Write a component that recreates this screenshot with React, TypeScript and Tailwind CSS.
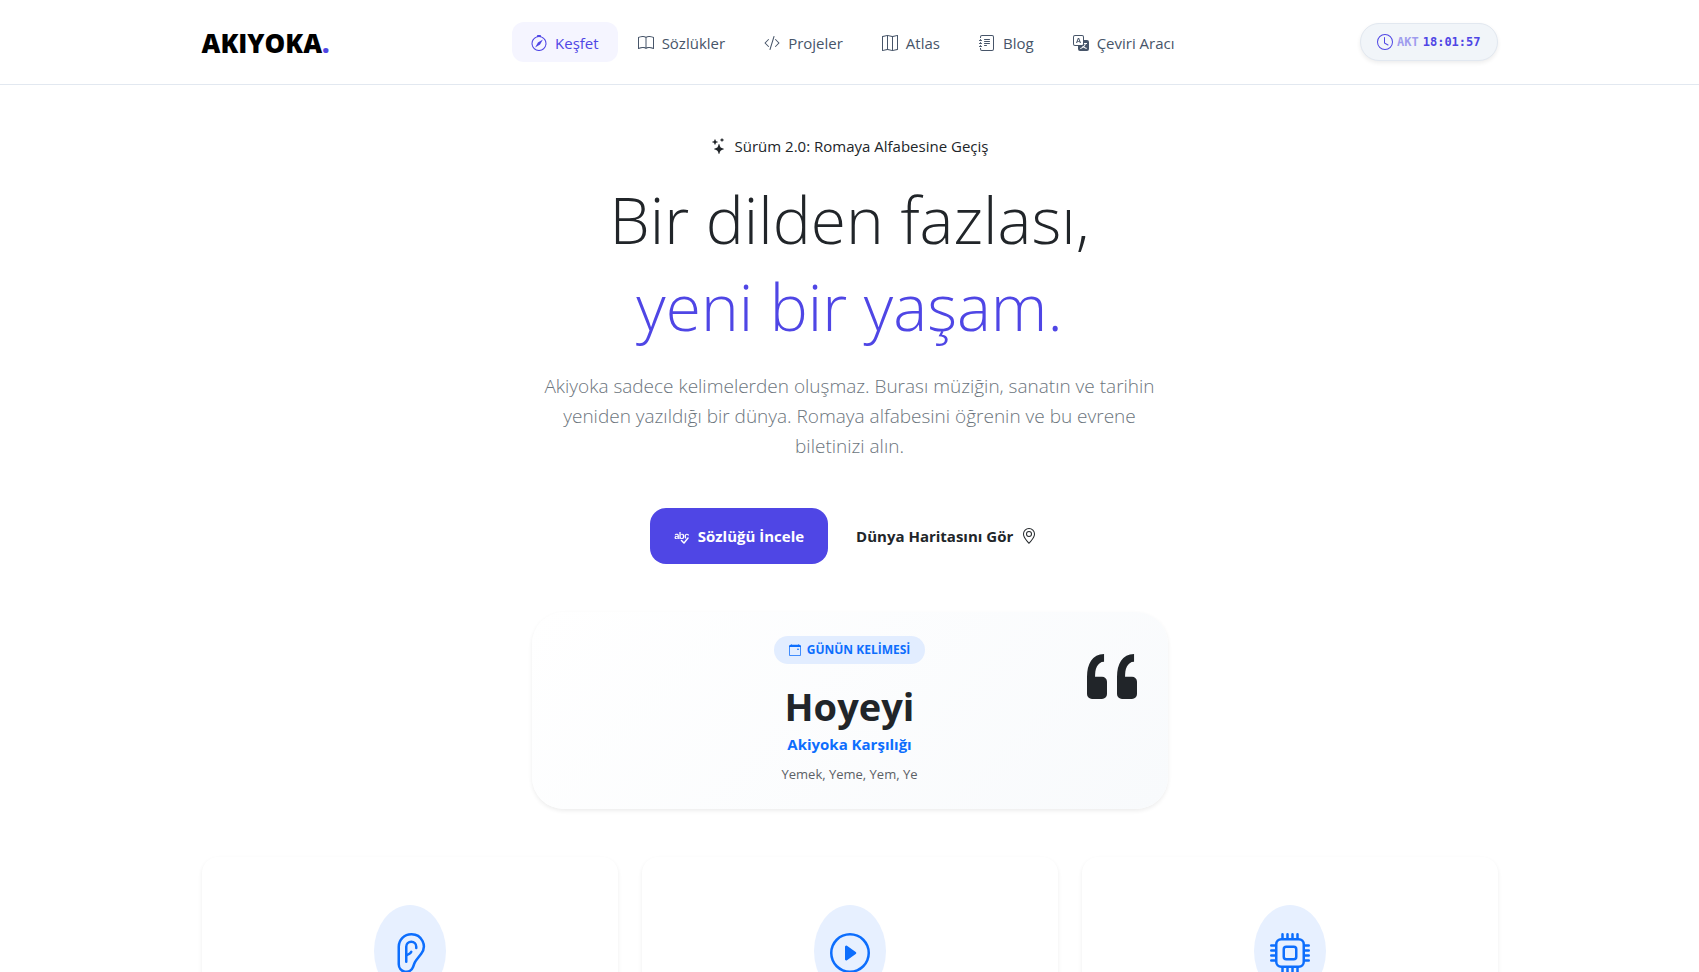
import type { ReactNode } from "react";
import {
  BsBook,
  BsCalendarEvent,
  BsClock,
  BsCodeSlash,
  BsCompass,
  BsCpu,
  BsEar,
  BsGeoAlt,
  BsJournalText,
  BsMap,
  BsPlayCircle,
  BsQuote,
  BsSpellcheck,
  BsStars,
  BsTranslate,
} from "react-icons/bs";

const navItems = [
  { label: "Keşfet", icon: <BsCompass />, active: true },
  { label: "Sözlükler", icon: <BsBook />, active: false },
  { label: "Projeler", icon: <BsCodeSlash />, active: false },
  { label: "Atlas", icon: <BsMap />, active: false },
  { label: "Blog", icon: <BsJournalText />, active: false },
  { label: "Çeviri Aracı", icon: <BsTranslate />, active: false },
];

function Header() {
  return (
    <header className="border-b border-[#e2e8f0] bg-white">
      <div className="mx-auto flex h-[84px] max-w-[1320px] items-center justify-between px-3">
        <a href="#" className="mr-4 pt-0.5 text-[26px] leading-10 font-extrabold text-black">
          AKIYOKA<span className="text-[#4f46e5]">.</span>
        </a>
        <nav className="flex gap-px">
          {navItems.map((item) => (
            <a
              key={item.label}
              href="#"
              className={
                item.active
                  ? "flex h-10 items-center gap-2 rounded-xl bg-[#f5f5ff] px-[19px] pt-0.5 text-[#4f46e5]"
                  : "flex h-10 items-center gap-2 rounded-xl px-[19px] pt-0.5 text-[#475569]"
              }
            >
              <span className="text-base">{item.icon}</span>
              {item.label}
            </a>
          ))}
        </nav>
        <div className="flex h-[38px] items-center gap-1 rounded-full border border-[#e2e8f0] bg-[#f1f5f9] px-4 font-['DejaVu_Sans_Mono',monospace] text-xs font-bold text-[#4f46e5] shadow-[0_2px_4px_rgba(0,0,0,0.075)]">
          <BsClock className="text-base" />
          <span className="opacity-50">AKT</span>
          <time>18:01:57</time>
        </div>
      </div>
    </header>
  );
}

function Feature({ icon }: { icon: ReactNode }) {
  return (
    <article className="flex flex-col items-center rounded-2xl bg-white px-6 py-12 shadow-[0_2px_4px_rgba(0,0,0,0.075)]">
      <div className="rounded-[50%] bg-[#e7f0ff] px-4 pt-7 pb-6 text-[40px] text-[#0d6efd]">{icon}</div>
    </article>
  );
}

export default function App() {
  return (
    <div className="min-h-screen bg-white font-['Open_Sans','Noto_Sans',sans-serif] text-[15px] text-[#212529]">
      <Header />
      <main className="mx-auto max-w-[1320px] px-3 pt-[49px]">
        <section className="mx-auto flex max-w-[636px] flex-col items-center text-center">
          <p className="flex items-center gap-2 leading-6">
            <BsStars className="text-base" />
            Sürüm 2.0: Romaya Alfabesine Geçiş
          </p>
          <h1 className="mt-[18px] text-[64px] leading-[87px] font-light">
            Bir dilden fazlası,
            <br />
            <span className="text-[#4f46e5]">yeni bir yaşam.</span>
          </h1>
          <p className="mt-[21px] text-[19px] leading-[30px] font-light text-[#6c757d]">
            Akiyoka sadece kelimelerden oluşmaz. Burası müziğin, sanatın ve tarihin yeniden yazıldığı bir dünya.
            Romaya alfabesini öğrenin ve bu evrene biletinizi alın.
          </p>
          <div className="mt-[47px] flex gap-4 font-bold">
            <a href="#" className="flex h-14 items-center gap-2 rounded-2xl bg-[#4f46e5] px-6 text-white">
              <BsSpellcheck className="text-base" />
              Sözlüğü İncele
            </a>
            <a href="#" className="flex h-14 items-center gap-2 px-3">
              Dünya Haritasını Gör
              <BsGeoAlt className="text-base" />
            </a>
          </div>
        </section>

        <section className="relative mx-auto mt-12 flex max-w-[636px] flex-col items-center rounded-[32px] bg-linear-135 from-white to-[#f8fafc] p-6 text-center shadow-[0_2px_4px_rgba(0,0,0,0.075)]">
          <BsQuote className="absolute top-[27px] right-4 text-[80px]" />
          <p className="flex h-7 items-center gap-1.5 rounded-full bg-[#e2edff] px-[15px] text-xs font-bold text-[#0d6efd]">
            <BsCalendarEvent />
            GÜNÜN KELİMESİ
          </p>
          <h2 className="mt-[18px] text-[38px] leading-[48px] font-bold">Hoyeyi</h2>
          <p className="mt-0.5 leading-6 font-bold text-[#0d6efd]">Akiyoka Karşılığı</p>
          <p className="mt-2 text-[13px] leading-[21px] text-[#5c6166]">Yemek, Yeme, Yem, Ye</p>
        </section>

        <section className="mt-12 grid grid-cols-3 gap-6">
          <Feature icon={<BsEar />} />
          <Feature icon={<BsPlayCircle />} />
          <Feature icon={<BsCpu />} />
        </section>
      </main>
    </div>
  );
}
